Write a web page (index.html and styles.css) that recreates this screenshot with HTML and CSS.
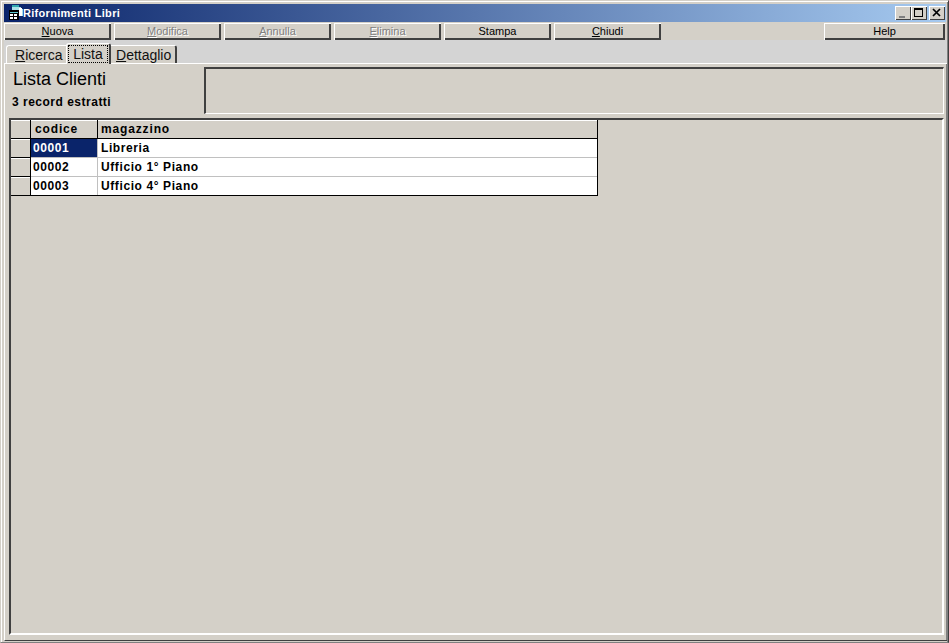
FILE: index.html
```html
<!DOCTYPE html>
<html lang="it">
<head>
<meta charset="utf-8">
<title>Rifornimenti Libri</title>
<link rel="stylesheet" href="styles.css">
</head>
<body>
<div class="window">
  <div class="titlebar">
    <svg class="appicon" width="16" height="16" viewBox="0 0 16 16">
      <path d="M4 0h7v2h2v2h2v7H4z" fill="#a8e0e8"/>
      <path d="M4 0h7v2H4z" fill="#30a8b0"/>
      <path d="M11 3h3v8h-3z" fill="#fff"/>
      <path d="M1 5h10v10H1z" fill="#000"/>
      <path d="M2 7h8v1H2z" fill="#60c8d0"/>
      <path d="M2 9h3v2H2zM6 9h3v2H6zM2 12h3v2H2zM6 12h3v2H6z" fill="#fff"/>
    </svg>
    <span class="title">Rifornimenti Libri</span>
    <div class="caption-buttons">
      <span class="capbtn"><svg width="12" height="10" viewBox="0 0 12 10"><path d="M2 8h6v2H2z" fill="#808080"/></svg></span>
      <span class="capbtn"><svg width="12" height="10" viewBox="0 0 12 10"><path d="M1 0h9v9H1zM2 2v6h7V2z" fill="#000" fill-rule="evenodd"/></svg></span>
      <span class="capbtn close"><svg width="12" height="10" viewBox="0 0 12 10"><path d="M2 1l7 7M9 1L2 8" stroke="#000" stroke-width="1.7" fill="none"/></svg></span>
    </div>
  </div>
  <div class="toolbar">
    <button class="btn"><u>N</u>uova</button>
    <button class="btn off"><u>M</u>odifica</button>
    <button class="btn off"><u>A</u>nnulla</button>
    <button class="btn off"><u>E</u>limina</button>
    <button class="btn">Stampa</button>
    <button class="btn"><u>C</u>hiudi</button>
    <button class="btn help">Help</button>
  </div>
  <div class="tabs">
    <div class="tab first"><u>R</u>icerca</div>
    <div class="tab active"><span class="focus">Lista</span></div>
    <div class="tab last"><u>D</u>ettaglio</div>
  </div>
  <div class="panel">
    <div class="head">
      <div class="head-left">
        <div class="heading">Lista Clienti</div>
        <div class="count">3 record estratti</div>
      </div>
      <div class="infobox"></div>
    </div>
    <div class="gridarea">
      <div class="grid">
        <div class="row hdr">
          <div class="cell ind"></div>
          <div class="cell code">codice</div>
          <div class="cell name">magazzino</div>
        </div>
        <div class="row">
          <div class="cell ind"></div>
          <div class="cell code sel">00001</div>
          <div class="cell name">Libreria</div>
        </div>
        <div class="row">
          <div class="cell ind"></div>
          <div class="cell code">00002</div>
          <div class="cell name">Ufficio 1° Piano</div>
        </div>
        <div class="row lastrow">
          <div class="cell ind"></div>
          <div class="cell code">00003</div>
          <div class="cell name">Ufficio 4° Piano</div>
        </div>
      </div>
    </div>
  </div>
</div>
</body>
</html>
```
FILE: styles.css
```css
* { box-sizing: border-box; }
html, body { margin: 0; padding: 0; }
body {
  width: 949px;
  height: 643px;
  overflow: hidden;
  background: #d4d0c8;
  font-family: "Liberation Sans", Arial, sans-serif;
  font-size: 11px;
  color: #000;
}
.window {
  width: 949px;
  height: 643px;
  padding: 3px 1px 1px 3px;
  display: flex;
  flex-direction: column;
  border-top: 1px solid #d4d0c8;
  border-left: 1px solid #d4d0c8;
  border-right: 1px solid #404040;
  border-bottom: 1px solid #808080;
  box-shadow: inset 1px 1px 0 #fff, inset -1px 0 0 #808080;
}
.titlebar {
  height: 18px;
  flex: none;
  margin-right: 1px;
  display: flex;
  align-items: center;
  padding-left: 4px;
  background: linear-gradient(90deg, #0a246a 0%, #a6caf0 100%);
}
.appicon { flex: none; margin-right: -1px; }
.title {
  color: #fff;
  font-weight: bold;
  font-size: 11px;
  letter-spacing: 0.3px;
}
.caption-buttons {
  margin-left: auto;
  margin-right: 1px;
  display: flex;
}
.capbtn {
  width: 16px;
  height: 14px;
  display: flex;
  align-items: center;
  justify-content: center;
  background: #d4d0c8;
  box-shadow: inset 1px 1px 0 #fff, inset -1px -1px 0 #404040;
}
.capbtn.close { margin-left: 2px; }
.toolbar {
  height: 17px;
  flex: none;
  margin-top: 1px;
  display: flex;
  gap: 3px;
}
.btn {
  width: 107px;
  height: 17px;
  padding: 0 0 1px;
  border: 0;
  background: #d4d0c8;
  color: #000;
  font-family: "Liberation Sans", Arial, sans-serif;
  font-size: 11px;
  line-height: 15px;
  box-shadow: inset 1px 1px 0 #fff, inset -2px -2px 0 #404040;
}
.btn.off { color: #808080; text-shadow: 1px 1px 0 #fff; }
.btn.help { width: 121px; margin-left: auto; margin-right: 2px; }
.tabs {
  height: 23px;
  flex: none;
  padding-left: 2px;
  display: flex;
  align-items: flex-end;
  background: #d4d4d4;
}
.tab {
  height: 18px;
  font-size: 14px;
  line-height: 19px;
  background: #d4d0c8;
  border-top: 1px solid #fff;
  color: #111;
  white-space: nowrap;
}
.tab.first {
  width: 60px;
  padding-left: 8px;
  border-left: 1px solid #fff;
  border-radius: 3px 0 0 0;
}
.tab.active {
  width: 45px;
  height: 21px;
  padding: 1px;
  border-left: 1px solid #fff;
  border-right: 2px solid #404040;
  border-radius: 3px 3px 0 0;
  position: relative;
  z-index: 1;
  margin-bottom: -1px;
}
.focus {
  display: block;
  height: 18px;
  text-align: center;
  line-height: 16px;
  border: 1px dotted #000;
}
.tab.last {
  width: 66px;
  padding-left: 5px;
  border-right: 2px solid #404040;
  border-radius: 0 3px 0 0;
}
.panel {
  flex: 1;
  min-height: 0;
  padding: 3px 2px 5px 4px;
  display: flex;
  flex-direction: column;
  border-top: 1px solid #fff;
  border-left: 1px solid #fff;
  border-bottom: 1px solid #404040;
  box-shadow: inset -1px 0 0 #808080;
}
.head {
  height: 49px;
  flex: none;
  display: flex;
}
.head-left { width: 195px; flex: none; }
.heading {
  font-size: 18px;
  line-height: 19px;
  margin-top: 3px;
  padding-left: 4px;
}
.count {
  font-size: 12px;
  font-weight: bold;
  line-height: 14px;
  margin-top: 6px;
  padding-left: 3px;
  letter-spacing: 0.5px;
}
.infobox {
  width: 740px;
  height: 47px;
  border-top: 2px solid #404040;
  border-left: 2px solid #404040;
  border-bottom: 1px solid #fff;
  border-right: 1px solid #fff;
}
.gridarea {
  flex: 1;
  min-height: 0;
  margin-top: 2px;
  width: 935px;
  border-top: 2px solid #404040;
  border-left: 2px solid #404040;
  border-bottom: 2px solid #fff;
  border-right: 2px solid #fff;
}
.grid {
  width: 587px;
  border-right: 1px solid #000;
  border-bottom: 1px solid #000;
}
.row {
  height: 19px;
  display: flex;
  border-bottom: 1px solid #c0c0c0;
}
.row.hdr { border-bottom: 1px solid #000; background: #d4d0c8; }
.row.lastrow { height: 18px; border-bottom: 0; }
.cell {
  font-size: 12px;
  font-weight: bold;
  line-height: 19px;
  letter-spacing: 0.6px;
  white-space: nowrap;
}
.hdr .cell { line-height: 18px; letter-spacing: 0.85px; }
.ind {
  width: 20px;
  flex: none;
  background: #d4d0c8;
  border-right: 1px solid #000;
  box-shadow: inset 0 1px 0 #fff;
  margin-bottom: -1px;
  border-bottom: 1px solid #000;
}
.lastrow .ind { margin-bottom: 0; border-bottom: 0; }
.hdr .ind { margin-bottom: 0; border-bottom: 0; }
.code {
  width: 67px;
  flex: none;
  padding-left: 2px;
  background: #fff;
  border-right: 1px solid #c0c0c0;
}
.name {
  flex: 1;
  padding-left: 3px;
  background: #fff;
}
.hdr .code { background: #d4d0c8; padding-left: 4px; border-right-color: #000; box-shadow: inset 0 1px 0 #fff; }
.hdr .name { background: #d4d0c8; box-shadow: inset 0 1px 0 #fff; }
.code.sel { background: #0a246a; color: #fff; }
```
